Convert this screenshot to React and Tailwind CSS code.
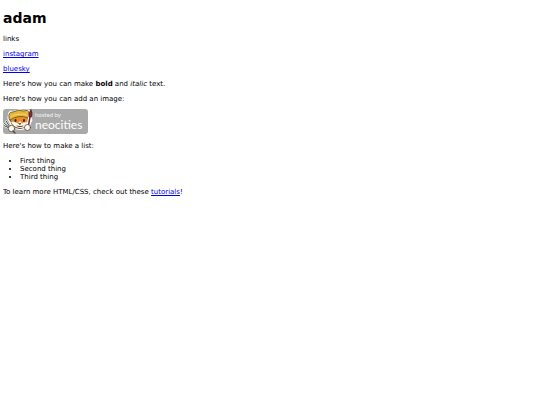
const things = ['First thing', 'Second thing', 'Third thing'];

function Link({ children }) {
  return (
    <a href="#" className="text-[#0000ee] underline">
      {children}
    </a>
  );
}

function HostedBadge() {
  return (
    <svg viewBox="0 0 85 25" className="h-[25px] w-[85px]" role="img" aria-label="hosted by neocities">
      <rect width="85" height="25" rx="3" fill="#a9a9a9" />
      <g strokeLinecap="round" strokeLinejoin="round">
        <path d="M1 14l6 5M3 12l4 6M1 16.5l5 2.5" stroke="#fff" strokeWidth="2" />
        <path d="M1 14l6 5M3 12l4 6M1 16.5l5 2.5" stroke="#444" strokeWidth="1" />
        <path d="M5.5 5Q6 1 10 2.5Q16-.5 21 1.5Q27-.5 27.5 4L27 8L29 11L27 15Q24 20.5 17 20.5Q9 20 7 14L5 10Z" fill="#fff" stroke="#fff" strokeWidth="1" />
        <path d="M7 10L9 6H24L27 10L27 14Q23 19.5 17 19.5Q10 19 8 13Z" fill="#e98b2d" stroke="#3b2b20" strokeWidth=".8" />
        <path d="M8 13Q11 12 15 14.5L17 12L19 14.5Q22 12.5 26.5 14Q23 19 17 19Q10 18 8 13Z" fill="#fff7e8" />
        <path d="M6 9Q5 2.5 10 3Q15 0 21 2Q25.5 0 26 4Q27 7 25 9Q16 5 7 11Z" fill="#e3b53b" stroke="#6a501c" strokeWidth=".8" />
        <path d="M8 7.5Q14 3.5 24 6" fill="none" stroke="#f6d75f" />
        <ellipse cx="12.5" cy="11.5" rx="1" ry="1.4" fill="#292421" />
        <ellipse cx="21" cy="11.5" rx="1" ry="1.4" fill="#292421" />
        <path d="M16 14.5h2l-1 1zM14 17q3 1.5 6 0" fill="#402820" stroke="#402820" strokeWidth=".6" />
        <path d="M27.5 5L25 19" stroke="#fff" strokeWidth="3.5" />
        <path d="M27 8L25 19" stroke="#712b35" strokeWidth="1.5" />
        <path d="M28 1Q30 4 28.5 8H26Q25 4 28 1Z" fill="#8e2635" stroke="#41242a" strokeWidth=".7" />
        <circle cx="8.5" cy="19.5" r="3.2" fill="#fffaf0" stroke="#51463d" strokeWidth=".8" />
        <circle cx="24.5" cy="18.5" r="3" fill="#fffaf0" stroke="#51463d" strokeWidth=".8" />
        <path d="M10 22L12 24" stroke="#444" strokeWidth="1.2" />
      </g>
      <text x="32" y="8" fill="#f4f4f4" fontSize="6" fontFamily="Lato, sans-serif">hosted by</text>
      <text x="32" y="20" fill="#fff" fontSize="12" fontFamily="Lato, sans-serif">neocities</text>
    </svg>
  );
}

export default function App() {
  return (
    <main className="flex flex-col gap-[7px] bg-white px-[3px] py-[10px] font-['DejaVu_Sans',sans-serif] text-[7px] leading-[8px] text-black">
      <h1 className="mb-[2px] text-[14px] leading-[16px] font-bold">adam</h1>
      <p>links</p>
      <p><Link>instagram</Link></p>
      <p><Link>bluesky</Link></p>
      <p>Here's how you can make <strong>bold</strong> and <em>italic</em> text.</p>
      <div className="flex flex-col gap-[6px] pb-px">
        <p>Here's how you can add an image:</p>
        <a href="#" className="self-start"><HostedBadge /></a>
      </div>
      <p>Here's how to make a list:</p>
      <ul className="list-disc pl-[17px]">
        {things.map((thing) => <li key={thing}>{thing}</li>)}
      </ul>
      <p>To learn more HTML/CSS, check out these <Link>tutorials</Link>!</p>
    </main>
  );
}
